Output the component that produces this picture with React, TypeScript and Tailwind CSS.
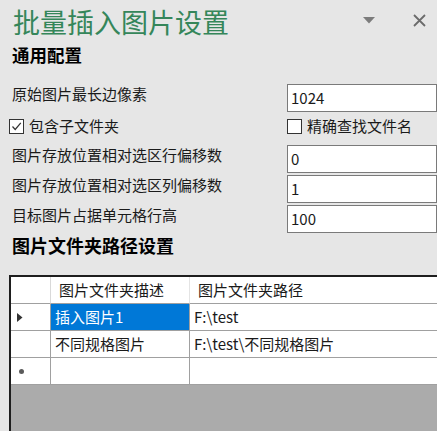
import { useState } from 'react';

const FONT = { fontFamily: '"Noto Sans CJK SC", "Noto Sans", sans-serif' };

type Row = { desc: string; path: string };

const ROWS: Row[] = [
  { desc: '插入图片1', path: 'F:\\test' },
  { desc: '不同规格图片', path: 'F:\\test\\不同规格图片' },
];

function Field({ label, value }: { label: string; value: string }) {
  return (
    <div className="flex items-start justify-between">
      <span className="pt-[1px] text-[15px] leading-[18px] text-[#1a1a1a]">{label}</span>
      <div className="flex h-[28px] w-[150px] items-center border border-[#7a7a7a] bg-white px-[3px] text-[15px] text-[#1a1a1a]">
        {value}
      </div>
    </div>
  );
}

function Check({ checked, label }: { checked: boolean; label: string }) {
  return (
    <label className="flex items-center gap-[5px] text-[15px] leading-[16px] text-[#1a1a1a]">
      <span className="grid h-[15px] w-[15px] place-items-center border border-[#333] bg-white">
        {checked && (
          <svg width="11" height="11" viewBox="0 0 11 11" fill="none">
            <polyline points="1.5,5.5 4.2,8.5 9.8,1.8" stroke="#333" strokeWidth="1.2" />
          </svg>
        )}
      </span>
      {label}
    </label>
  );
}

export default function App() {
  const [sel] = useState(0);

  return (
    <div style={FONT} className="flex h-[431px] w-[437px] flex-col overflow-hidden bg-[#e6e6e6]">
      {/* pane title bar */}
      <div className="flex items-center pl-[13px] pr-[11px] pt-[7px]">
        <h1 className="text-[27px] font-normal leading-[30px] text-[#35865a]">批量插入图片设置</h1>
        <div className="flex-1" />
        <svg width="12" height="7" viewBox="0 0 12 7" className="mt-[-4px]">
          <polygon points="0,0 12,0 6,6.5" fill="#7c7c7c" />
        </svg>
        <svg width="13" height="13" viewBox="0 0 13 13" className="ml-[38px] mt-[-4px]">
          <path d="M1 1 L12 12 M12 1 L1 12" stroke="#6b6b6b" strokeWidth="1.8" />
        </svg>
      </div>

      <div className="pl-[12px]">
        <h2 className="mt-[8px] text-[17.5px] font-bold leading-[20px] text-black">通用配置</h2>

        <div className="mt-[19px]">
          <Field label="原始图片最长边像素" value="1024" />
        </div>

        <div className="mt-[6px] flex h-[16px] items-center">
          <div className="ml-[-3px] flex-1">
            <Check checked label="包含子文件夹" />
          </div>
          <div className="w-[150px]">
            <Check checked={false} label="精确查找文件名" />
          </div>
        </div>

        <div className="mt-[11px] flex flex-col gap-[2px]">
          <Field label="图片存放位置相对选区行偏移数" value="0" />
          <Field label="图片存放位置相对选区列偏移数" value="1" />
          <Field label="目标图片占据单元格行高" value="100" />
        </div>

        <h2 className="mt-[2px] text-[18px] font-bold leading-[20px] text-black">图片文件夹路径设置</h2>
      </div>

      {/* data grid */}
      <div className="ml-[9px] mt-[20px] flex flex-1 flex-col border-l-2 border-t-2 border-[#1e1e1e]">
        <div className="grid grid-cols-[40px_139px_1fr] bg-white text-[15px] text-[#1a1a1a]">
          <div className="h-[27px] border-b border-r border-b-[#a0a0a0] border-r-[#d9d9d9]" />
          <div className="flex h-[27px] items-center border-b border-r border-b-[#a0a0a0] border-r-[#e4e4e4] px-[8px]">
            图片文件夹描述
          </div>
          <div className="flex h-[27px] items-center border-b border-[#a0a0a0] px-[8px]">图片文件夹路径</div>

          {ROWS.map((r, i) => (
            <div key={i} className="contents">
              <div className="flex h-[27px] items-center border-b border-r border-[#a0a0a0] pl-[6px]">
                {i === sel && (
                  <svg width="6" height="9" viewBox="0 0 6 9">
                    <polygon points="0,0 5.5,4.5 0,9" fill="#333" />
                  </svg>
                )}
              </div>
              <div
                className={
                  i === sel
                    ? 'flex h-[27px] items-center border-b border-r border-[#a0a0a0] bg-[#0078d7] px-[4px] text-white'
                    : 'flex h-[27px] items-center border-b border-r border-[#a0a0a0] px-[4px]'
                }
              >
                {r.desc}
              </div>
              <div className="flex h-[27px] items-center border-b border-[#a0a0a0] px-[4px]">{r.path}</div>
            </div>
          ))}

          {/* new row */}
          <div className="flex h-[27px] items-center border-b border-r border-[#a0a0a0] pl-[8px]">
            <span className="h-[5px] w-[5px] rounded-full bg-[#5a5a5a]" />
          </div>
          <div className="h-[27px] border-b border-r border-[#a0a0a0]" />
          <div className="h-[27px] border-b border-[#a0a0a0]" />
        </div>
        <div className="flex-1 bg-[#ababab]" />
      </div>
    </div>
  );
}
